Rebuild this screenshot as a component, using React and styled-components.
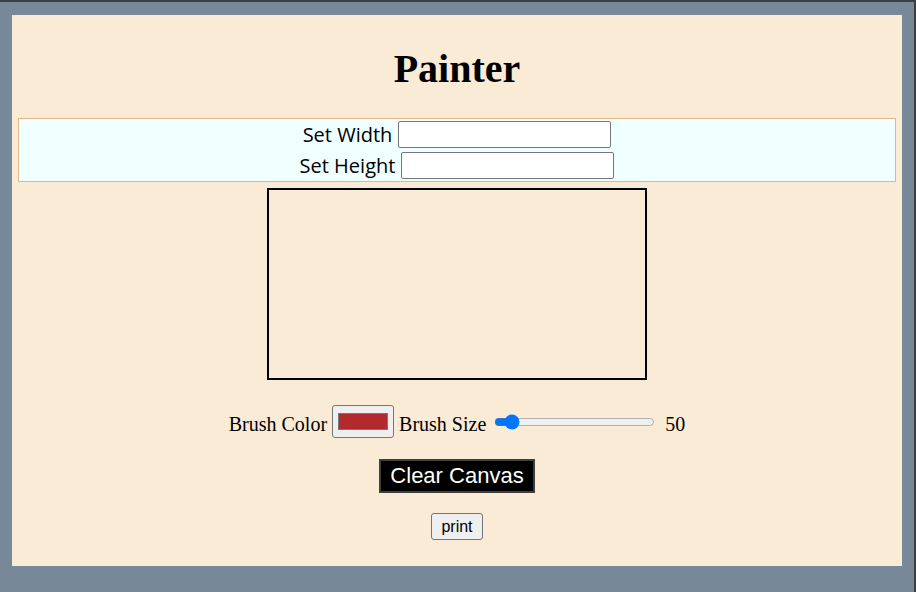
import React, { useState } from 'react';
import styled, { createGlobalStyle } from 'styled-components';

const GlobalStyle = createGlobalStyle`
  html, body {
    margin: 0;
    padding: 0;
    background: #778899;
  }
`;

// Outer window frame with the slate background
const Page = styled.div`
  box-sizing: border-box;
  min-height: 100vh;
  border-top: 2px solid #3b3e42;
  border-right: 2px solid #3b3e42;
  padding: 13px 12px 0 12px;
`;

const Panel = styled.div`
  background: #faebd7;
  padding: 31px 6px 26px 6px;
  text-align: center;
  font-family: "Liberation Serif", "Times New Roman", serif;
`;

const Title = styled.h1`
  font-family: "Liberation Serif", "Times New Roman", serif;
  font-size: 40px;
  font-weight: bold;
  line-height: 46px;
  margin: 0 0 26px 0;
`;

const Controls = styled.div`
  background: #f0ffff;
  border: 1px solid #deb887;
  display: flex;
  flex-direction: column;
`;

const ControlRow = styled.div`
  height: 31px;
  display: flex;
  align-items: center;
  justify-content: center;
  gap: 6px;
`;

const Label = styled.label`
  font-family: "Comic Sans MS", "Open Sans", sans-serif;
  font-size: 20px;
  color: #000;
`;

const SizeInput = styled.input`
  box-sizing: border-box;
  width: 213px;
  height: 27px;
  border: 1px solid #767676;
  border-radius: 2px;
  background: #fff;
  padding: 0 4px;
  font-size: 16px;
`;

const Canvas = styled.canvas`
  display: block;
  margin: 6px auto 0 auto;
  border: 2px solid #000;
  width: 376px;
  height: 188px;
`;

const BrushRow = styled.div`
  display: flex;
  align-items: center;
  justify-content: center;
  margin-top: 25px;
  font-size: 20px;
  gap: 5px;
`;

const RowText = styled.span`
  padding-top: 5px;
`;

const ColorInput = styled.input`
  box-sizing: border-box;
  width: 62px;
  height: 33px;
  padding: 3px 3px;
  border: 1px solid #767676;
  border-radius: 3px;
  background: #efefef;
  cursor: pointer;
`;

const Slider = styled.input`
  width: 161px;
  margin: 0 5px 0 3px;
  accent-color: #0075ff;
`;

const ClearButton = styled.button`
  display: block;
  margin: 21px auto 0 auto;
  height: 34px;
  padding: 0 9px;
  background: #000;
  color: #fff;
  border: 2px solid #3f3f3f;
  border-radius: 0;
  font-family: "Liberation Sans", Arial, sans-serif;
  font-size: 22px;
`;

const PrintButton = styled.button`
  display: block;
  margin: 20px auto 0 auto;
  height: 27px;
  padding: 1px 9px;
  background: #efefef;
  color: #000;
  border: 1px solid #767676;
  border-radius: 3px;
  font-family: "Liberation Sans", Arial, sans-serif;
  font-size: 16px;
`;

export default function App() {
  const [size, setSize] = useState(50);
  const [color, setColor] = useState('#b22a2e');

  return (
    <Page>
      <GlobalStyle />
      <Panel>
        <Title>Painter</Title>
        <Controls>
          <ControlRow>
            <Label>Set Width</Label>
            <SizeInput type="text" />
          </ControlRow>
          <ControlRow>
            <Label>Set Height</Label>
            <SizeInput type="text" />
          </ControlRow>
        </Controls>
        <Canvas width={376} height={188} />
        <BrushRow>
          <RowText>Brush Color</RowText>
          <ColorInput type="color" value={color} onChange={(e) => setColor(e.target.value)} />
          <RowText>Brush Size</RowText>
          <Slider
            type="range"
            min={0}
            max={720}
            value={size}
            onChange={(e) => setSize(Number(e.target.value))}
          />
          <RowText>{size}</RowText>
        </BrushRow>
        <ClearButton>Clear Canvas</ClearButton>
        <PrintButton>print</PrintButton>
      </Panel>
    </Page>
  );
}
